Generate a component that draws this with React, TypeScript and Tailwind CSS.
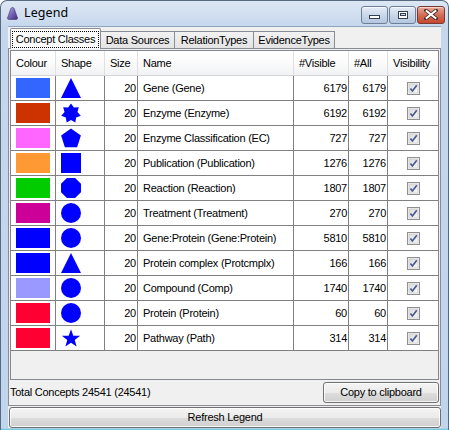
import React from "react";

type Row = { color: string; shape: string; name: string; vis: number; all: number };

const rows: Row[] = [
  { color: "#3366ff", shape: "triangle", name: "Gene (Gene)", vis: 6179, all: 6179 },
  { color: "#cc3300", shape: "star7", name: "Enzyme (Enzyme)", vis: 6192, all: 6192 },
  { color: "#ff66ff", shape: "pentagon", name: "Enzyme Classification (EC)", vis: 727, all: 727 },
  { color: "#ff9933", shape: "square", name: "Publication (Publication)", vis: 1276, all: 1276 },
  { color: "#00cc00", shape: "octagon", name: "Reaction (Reaction)", vis: 1807, all: 1807 },
  { color: "#cc0099", shape: "circle", name: "Treatment (Treatment)", vis: 270, all: 270 },
  { color: "#0000ff", shape: "circle", name: "Gene:Protein (Gene:Protein)", vis: 5810, all: 5810 },
  { color: "#0000ff", shape: "triangle", name: "Protein complex (Protcmplx)", vis: 166, all: 166 },
  { color: "#9999ff", shape: "circle", name: "Compound (Comp)", vis: 1740, all: 1740 },
  { color: "#ff0033", shape: "circle", name: "Protein (Protein)", vis: 60, all: 60 },
  { color: "#ff0033", shape: "star5", name: "Pathway (Path)", vis: 314, all: 314 },
];

function polyPoints(n: number, R: number, r: number | null, cx: number, cy: number, rotDeg: number) {
  const pts: string[] = [];
  const count = r === null ? n : n * 2;
  for (let i = 0; i < count; i++) {
    const rad = r === null ? R : i % 2 === 0 ? R : r;
    const a = ((rotDeg + (360 / count) * i) * Math.PI) / 180;
    pts.push(`${(cx + rad * Math.cos(a)).toFixed(2)},${(cy + rad * Math.sin(a)).toFixed(2)}`);
  }
  return pts.join(" ");
}

function Shape({ kind }: { kind: string }) {
  const fill = "#0000ff";
  let el: React.ReactNode = null;
  switch (kind) {
    case "triangle":
      el = <polygon points="10,0 20,20 0,20" fill={fill} />;
      break;
    case "star7":
      el = <polygon points={polyPoints(7, 10, 6.6, 10, 10.5, -90)} fill={fill} />;
      break;
    case "pentagon":
      el = <polygon points={polyPoints(5, 10.4, null, 10, 10.8, -90)} fill={fill} />;
      break;
    case "square":
      el = <rect x="0" y="0" width="20" height="20" fill={fill} />;
      break;
    case "octagon":
      el = <polygon points={polyPoints(8, 10.8, null, 10, 10, 22.5)} fill={fill} />;
      break;
    case "circle":
      el = <circle cx="10" cy="10" r="10" fill={fill} />;
      break;
    case "star5":
      el = <polygon points={polyPoints(5, 9.6, 3.9, 10, 10.8, -90)} fill={fill} />;
      break;
  }
  return (
    <svg width="20" height="20" viewBox="0 0 20 20" className="block">
      {el}
    </svg>
  );
}

function CheckBox() {
  return (
    <svg width="13" height="13" viewBox="0 0 13 13" className="block">
      <defs>
        <linearGradient id="cbg" x1="0" y1="0" x2="1" y2="1">
          <stop offset="0" stopColor="#dcdcdc" />
          <stop offset="1" stopColor="#f7f7f7" />
        </linearGradient>
      </defs>
      <rect x="0.5" y="0.5" width="12" height="12" fill="#f4f4f4" stroke="#8f8f8f" />
      <rect x="2" y="2" width="9" height="9" fill="url(#cbg)" stroke="#c4c4c4" strokeWidth="0.6" />
      <path d="M3.4 6.4 L5.4 9 L9.8 3.2" fill="none" stroke="#4a5c94" strokeWidth="1.7" strokeLinejoin="round" />
    </svg>
  );
}

function CaptionButton({ kind }: { kind: "min" | "max" | "close" }) {
  if (kind === "close") {
    return (
      <div className="w-[28px] h-[18px] rounded-[3px] border border-[#7a3a30] bg-gradient-to-b from-[#e8a99c] via-[#d36d55] to-[#c5482f] flex items-center justify-center shadow-[inset_0_1px_0_rgba(255,255,255,0.5)]">
        <svg width="14" height="11" viewBox="0 0 14 11">
          <path d="M2 1.5 L12 9.5 M12 1.5 L2 9.5" stroke="#4a2a24" strokeWidth="3.6" strokeLinecap="square" />
          <path d="M2.6 2 L11.4 9 M11.4 2 L2.6 9" stroke="#ffffff" strokeWidth="2" strokeLinecap="square" />
        </svg>
      </div>
    );
  }
  return (
    <div className="w-[27px] h-[18px] rounded-[3px] border border-[#6e7f98] bg-gradient-to-b from-[#e6edf6] via-[#c9d7ea] to-[#b4c7e0] flex items-center justify-center shadow-[inset_0_1px_0_rgba(255,255,255,0.7)]">
      {kind === "min" ? (
        <div className="w-[11px] h-[4px] mt-[5px] bg-white border border-[#33404f]" />
      ) : (
        <div className="w-[10px] h-[8px] bg-white border border-[#33404f] flex items-center justify-center">
          <div className="w-[6px] h-[3px] border border-[#33404f] bg-[#cfdcec]" />
        </div>
      )}
    </div>
  );
}

function WinButton({ children, className }: { children: React.ReactNode; className: string }) {
  return (
    <div
      className={
        "rounded-[3px] border border-[#707070] flex items-center justify-center text-[11px] text-black bg-[linear-gradient(to_bottom,#f4f4f4_0%,#ebebeb_50%,#dddddd_51%,#cfcfcf_100%)] shadow-[inset_0_0_0_1px_rgba(255,255,255,0.8)] " +
        className
      }
    >
      {children}
    </div>
  );
}

export default function App() {
  const font = { fontFamily: '"Liberation Sans", Arial, sans-serif' };
  const cols = "grid grid-cols-[45px_49px_33px_156px_55px_39px_50px]";
  return (
    <div
      className="w-[449px] h-[430px] flex flex-col overflow-hidden rounded-t-[7px] border-x border-t border-[#586a82] bg-[linear-gradient(to_bottom,#dce7f4_0px,#c6d7ec_26px,#c0d4ec_100%)] tracking-[-0.25px]"
      style={font}
    >
      {/* Title bar */}
      <div className="h-[25px] flex items-center shrink-0 relative">
        <svg width="11" height="13" viewBox="0 0 11 13" className="ml-[6px] mt-[-1px]">
          <defs>
            <linearGradient id="ico" x1="0" y1="0" x2="1" y2="1">
              <stop offset="0" stopColor="#b7aee0" />
              <stop offset="0.5" stopColor="#7464b4" />
              <stop offset="1" stopColor="#3e2f7a" />
            </linearGradient>
          </defs>
          <path d="M5.5 0.5 C7 0.5 7.5 2 8 4 L10.5 11 Q10.6 12.4 9 12.4 L2 12.4 Q0.4 12.4 0.5 11 L3 4 C3.5 2 4 0.5 5.5 0.5 Z" fill="url(#ico)" stroke="#3a2c6e" strokeWidth="0.6" />
        </svg>
        <span className="ml-[6px] text-[12.5px] text-black tracking-[0.1px]" style={{ fontFamily: '"Noto Sans", "Liberation Sans", sans-serif' }}>
          Legend
        </span>
        <div className="ml-auto mr-[3px] mt-[2px] flex gap-[1px] items-start">
          <CaptionButton kind="min" />
          <CaptionButton kind="max" />
          <CaptionButton kind="close" />
        </div>
      </div>

      {/* Client area */}
      <div className="mx-[7px] flex flex-col bg-[#f0f0f0] h-[402px] border-t border-[#8ea3bf]">
        {/* Tabs */}
        <div className="h-[21px] flex items-end pl-[2px] relative z-10">
          <div className="h-[21px] w-[91px] border border-b-0 border-[#898c95] bg-[#fbfbfb] rounded-t-[2px] flex items-center justify-center relative top-[1px]">
            <div className="border border-dotted border-black px-[3px] leading-[15px] text-[11px] text-black whitespace-nowrap">
              Concept Classes
            </div>
          </div>
          <div className="h-[17px] w-[74px] border border-b-0 border-l-0 border-[#898c95] bg-[linear-gradient(to_bottom,#f2f2f2,#e3e3e3)] flex items-center justify-center text-[11px] text-black whitespace-nowrap">
            Data Sources
          </div>
          <div className="h-[17px] w-[79px] border border-b-0 border-l-0 border-[#898c95] bg-[linear-gradient(to_bottom,#f2f2f2,#e3e3e3)] flex items-center justify-center text-[11px] text-black whitespace-nowrap">
            RelationTypes
          </div>
          <div className="h-[17px] w-[81px] border border-b-0 border-l-0 border-[#898c95] bg-[linear-gradient(to_bottom,#f2f2f2,#e3e3e3)] flex items-center justify-center text-[11px] text-black whitespace-nowrap">
            EvidenceTypes
          </div>
        </div>

        {/* Panel */}
        <div className="h-[358px] w-[433px] border border-[#898c95] bg-[#f0f0f0] flex flex-col">
          {/* Scroll pane with table */}
          <div className="mx-[1px] mt-[1px] h-[330px] border border-[#828790] bg-[#f0f0f0] flex flex-col">
            {/* Header */}
            <div className={cols + " h-[25px] border-b border-[#d5d5d5] bg-[linear-gradient(to_bottom,#ffffff_0%,#fbfbfb_50%,#f1f2f4_100%)] text-[11px] text-black"}>
              {["Colour", "Shape", "Size", "Name", "#Visible", "#All", "Visibility"].map((h, i) => (
                <div
                  key={h}
                  className={"flex items-center pl-[5px] " + (i < 6 ? "border-r border-[#e0e0e0]" : "")}
                >
                  {h}
                </div>
              ))}
            </div>
            {/* Rows */}
            {rows.map((r, i) => (
              <div key={i} className={cols + " h-[25px] border-b border-[#808080] bg-white text-[11px] text-black"}>
                <div className="border-r border-[#808080] flex items-center pl-[5px]">
                  <div className="w-[34px] h-[20px]" style={{ backgroundColor: r.color }} />
                </div>
                <div className="border-r border-[#808080] flex items-center pl-[5px]">
                  <Shape kind={r.shape} />
                </div>
                <div className="border-r border-[#808080] flex items-center justify-end pr-[1px]">20</div>
                <div className="border-r border-[#808080] flex items-center pl-[5px] whitespace-nowrap overflow-hidden">{r.name}</div>
                <div className="border-r border-[#808080] flex items-center justify-end pr-[1px]">{r.vis}</div>
                <div className="border-r border-[#808080] flex items-center justify-end pr-[1px]">{r.all}</div>
                <div className="flex items-center justify-center">
                  <CheckBox />
                </div>
              </div>
            ))}
          </div>
          {/* Footer */}
          <div className="flex items-center h-[25px] pl-[1px] pr-[1px]">
            <span className="text-[11px] text-black">Total Concepts 24541 (24541)</span>
            <WinButton className="ml-auto w-[116px] h-[21px]">Copy to clipboard</WinButton>
          </div>
        </div>

        <WinButton className="mt-[1px] ml-[1px] w-[432px] h-[22px]">Refresh Legend</WinButton>
      </div>
      <div className="flex-1 bg-[linear-gradient(to_bottom,#c2d5ec,#5fc6dc)]" />
    </div>
  );
}
